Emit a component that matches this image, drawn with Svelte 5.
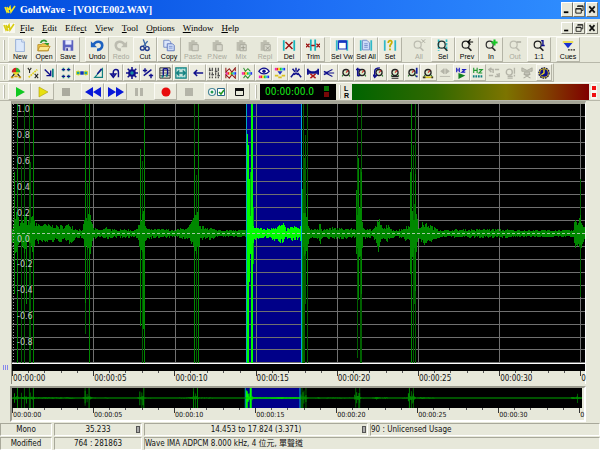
<script>
  const menus = [
    ['', 'F', 'ile'], ['', 'E', 'dit'], ['Effe', 'c', 't'], ['', 'V', 'iew'],
    ['', 'T', 'ool'], ['', 'O', 'ptions'], ['', 'W', 'indow'], ['', 'H', 'elp']
  ];

  const clip = '<path d="M3 3h10v10H3zM6 1h4v3H6z" fill="#bdbdb0"/><path d="M7 6h7v7H7z" fill="#d8d8cc" stroke="#a8a89c"/>';
  const lens = (c) => `<circle cx="6.5" cy="6" r="4" fill="none" stroke="${c}" stroke-width="1.4"/><path d="M9 9l4 4" stroke="${c}" stroke-width="2"/>`;
  const bars = (c) => `<path d="M2 1v12M14 1v12" stroke="${c}" stroke-width="2"/>`;

  const fileGroups = [
    [
      { label: 'New', icon: '<path d="M3 0h7l3 3v11H3z" fill="#dbe8fa" stroke="#8ea8d4"/><path d="M10 0v3h3" fill="#fff" stroke="#8ea8d4"/>' },
      { label: 'Open', icon: '<path d="M1 6h4l1-1h7v8H1z" fill="#f4cf50" stroke="#b88a20"/><path d="M3 8h12l-3 5H1z" fill="#fbe98f" stroke="#b88a20"/><path d="M4 4c2-4 6-3 7-1" fill="none" stroke="#2a9a30" stroke-width="2"/><path d="M8 4h6l-2 3z" fill="#2a9a30"/>' },
      { label: 'Save', icon: '<path d="M2 1h12v12H3l-1-1z" fill="#5b62c0"/><path d="M5 1h7v5H5z" fill="#e8ecff"/><path d="M5 9h6v4H5z" fill="#e0e0f0"/><path d="M6 10h2v3H6z" fill="#3a3f90"/>' }
    ],
    [
      { label: 'Undo', icon: '<path d="M4 6c3-5 10-4 10 1 0 4-4 5-6 5" fill="none" stroke="#1e62c0" stroke-width="3"/><path d="M1 2v7h7z" fill="#1e62c0"/>' },
      { label: 'Redo', off: true, icon: '<path d="M12 6c-3-5-10-4-10 1 0 4 4 5 6 5" fill="none" stroke="#bcbcb0" stroke-width="3"/><path d="M15 2v7H8z" fill="#bcbcb0"/>' },
      { label: 'Cut', icon: '<path d="M6 0l3 8M11 2L6 8" stroke="#3a68a8" stroke-width="1.6"/><circle cx="5" cy="10" r="2.2" fill="none" stroke="#203a90" stroke-width="1.6"/><circle cx="10.500" cy="10.500" r="2.200" fill="none" stroke="#203a90" stroke-width="1.6"/>' },
      { label: 'Copy', icon: '<path d="M2 1h6l2 2v6H2z" fill="#dce6fa" stroke="#6f86c4"/><path d="M6 5h6l2 2v6H6z" fill="#cddaf6" stroke="#5a74bc"/><path d="M8 8h4M8 10h4" stroke="#7d94cf"/>' },
      { label: 'Paste', off: true, icon: clip },
      { label: 'P.New', off: true, icon: clip },
      { label: 'Mix', off: true, icon: clip + '<path d="M10.500 7v5M8 9.500h5" stroke="#98988c"/>' },
      { label: 'Repl', off: true, icon: clip + '<path d="M9 8l4 4M13 8l-4 4" stroke="#98988c"/>' },
      { label: 'Del', icon: bars('#18b4bc') + '<path d="M4 3l8 8M12 3l-8 8" stroke="#9a1010" stroke-width="1.6"/>' },
      { label: 'Trim', icon: '<path d="M5.500 0v13M10.500 0v13" stroke="#18b4bc" stroke-width="2"/><path d="M0 5l4 4M4 5L0 9M12 5l4 4M16 5l-4 4M6 7h4" stroke="#9a1010" stroke-width="1.5"/>' }
    ],
    [
      { label: 'Sel Vw', icon: bars('#30b8c8') + '<path d="M4 2h9v9H4z" fill="#fff" stroke="#1638c0" stroke-width="1.4"/><path d="M4 1h9v3H4z" fill="#1638c0"/>' },
      { label: 'Sel All', icon: bars('#30b8c8') + '<path d="M4 1h5l3 3v8H4z" fill="#cddcf8" stroke="#6f8cc8"/><path d="M6 5h4M6 7h4M6 9h4" stroke="#6f8cc8"/>' },
      { label: 'Set', icon: bars('#30b8c8') + '<path d="M6 4c0-4 5-3 4 0l-2 3v2M8 10.500v2" fill="none" stroke="#c8b000" stroke-width="2"/>' }
    ],
    [
      { label: 'All', off: true, icon: lens('#bcbcb0') + '<path d="M11 0l4 4M15 0l-4 4" stroke="#a8a89c"/>' },
      { label: 'Sel', icon: '<path d="M3 0v13M12 0v13" stroke="#30c0c8" stroke-width="2" stroke-dasharray="3 1"/>' + lens('#203030') },
      { label: 'Prev', icon: lens('#202020') + '<path d="M9 3h6M12 0L9 3l3 3" fill="none" stroke="#000" stroke-width="1.4"/>' },
      { label: 'In', icon: lens('#303030') + '<path d="M12 0v7M8.500 3.500h7" stroke="#18c828" stroke-width="2.400"/>' },
      { label: 'Out', off: true, icon: lens('#bcbcb0') + '<path d="M10 3h5" stroke="#a8a89c" stroke-width="1.600"/>' },
      { label: '1:1', icon: lens('#202020') + '<path d="M10.500 1.500h2v5M10.500 7h4" fill="none" stroke="#10108c" stroke-width="1.600"/>' }
    ],
    [
      { label: 'Cues', icon: '<path d="M2 3h12" stroke="#e8d840" stroke-width="2"/><path d="M3 4h10l-5 6z" fill="#1830d0"/><path d="M8 12h2M11 12h2M14 12h2" stroke="#222" stroke-width="1.500"/>' }
    ]
  ];

  const knob = '<circle cx="7" cy="6.500" r="3.600" fill="#d8e8c8" stroke="#222" stroke-width="1.500"/><path d="M7 6.500L9.500 4" stroke="#d02020" stroke-width="1.200"/><path d="M3.500 9.500l-1 1.500M10.500 9.500l1 1.500" stroke="#2a7a2a" stroke-width="1.300"/>';
  const rainbow = (y) => ['#f020c0', '#f02020', '#f0d820', '#20c830', '#20c8e8', '#2030f0'].map((c, i) => `<path d="M${1 + i * 2} ${y}h2v3h-2z" fill="${c}"/>`).join('');
  const X = '#10108c';

  const effects = [
    ['Doppler', '<path d="M2 6a5 5 0 0 1 5-5v6z" fill="#d02020"/><path d="M7 1a5 5 0 0 1 5 5l-5 1z" fill="#30b030"/><path d="M4 6h6v3H4z" fill="#e8d820"/><path d="M2 12L5 8M12 12L9 8" stroke="#222" stroke-width="1.500"/><path d="M1 12h3M10 12h3M5 11h4" stroke="#d0a010" stroke-width="2"/>'],
    ['Dynamics', '<path d="M2 12L12 3" stroke="#e0d020" stroke-width="2" stroke-dasharray="2 1"/><path d="M1 1l2 3 2-3M3 4v3M9 8l4 5M13 8l-4 5" fill="none" stroke="#222" stroke-width="1.200"/>'],
    ['Echo', `<path d="M2 3l7 7M9 4v6H4" fill="none" stroke="${X}" stroke-width="1.600"/><path d="M11.500 2v10" stroke="#108080" stroke-width="2"/>`],
    ['Compressor', '<path d="M4 1v4M10 1v4M4 9v4M10 9v4" stroke="#108080" stroke-width="2"/><path d="M2 3h4M8 3h4M2 11h4M8 11h4" stroke="#10108c" stroke-width="1.500"/>'],
    ['Flanger', '<path d="M0 5l3-1 4 3 4-3 3 1v4l-3 1-4-3-4 3-3-1z" fill="#e8e020"/><path d="M1 7h3M10 7h3" stroke="#18a0a8" stroke-width="3"/><path d="M5 7h4" stroke="#1030c0" stroke-width="4"/>'],
    ['Interpolate', `<path d="M2 12L11 2v10z" fill="none" stroke="#108080" stroke-width="1.400"/><path d="M5 8L10 2" stroke="${X}" stroke-width="1.600"/>`],
    ['Invert', `<path d="M5 10V6c0-4 6-4 6 0v6M2 8h6l-3 4z" fill="none" stroke="${X}" stroke-width="1.700"/>`],
    ['Mechanize', `<circle cx="7" cy="7" r="4.500" fill="${X}"/><path d="M7 0v14M0 7h14M2 2l10 10M12 2L2 12" stroke="${X}" stroke-width="1.800"/><circle cx="7" cy="7" r="2" fill="#18909c"/>`],
    ['Offset', `<path d="M2 10l9-7M1 4h5M3.500 1.500v5M8 10h5M10.500 8v5" stroke="${X}" stroke-width="1.700"/>`],
    ['Parametric', '<path d="M1 1h12v12H1z" fill="#d8dccc" stroke="#222"/><path d="M1 4h12M1 7h12M1 10h12" stroke="#555"/><path d="M5 2v9M10 2v8M5 2h5" stroke="#10108c" stroke-width="1.600"/><path d="M3 11h2M8 10h2" stroke="#108080" stroke-width="3"/>'],
    ['Pitch', '<path d="M1 1h12v12H1z" fill="#c8e4dc" stroke="#108080" stroke-width="1.500"/><path d="M2 7h10M5 4L2 7l3 3M9 4l3 3-3 3" fill="none" stroke="#108080" stroke-width="1.700"/><path d="M3 2h8M3 12h8" stroke="#18a0a8" stroke-dasharray="2 1"/>'],
    ['Reverse', `<path d="M2 7h11M6 3.500L2.500 7 6 10.500" fill="none" stroke="${X}" stroke-width="1.800"/>`],
    ['Equalizer', '<path d="M2 1v12M5 1v12M9 1v12M12 1v12" stroke="#333" stroke-width="1.200" stroke-dasharray="4 1"/><path d="M1 4h3M4 9h3M8 5h3M11 10h3" stroke="#555" stroke-width="1.500"/>'],
    ['Band filter', rainbow(6) + '<path d="M1 1v5l4-4 3 4 4-5v4M1 13V9l4 4 3-4 4 4V9" fill="none" stroke="#901818" stroke-width="1.200"/>'],
    ['Low pass', rainbow(6) + '<path d="M3 1l2 4 3-3 3 3M3 13l2-3 3 3 3-4" fill="none" stroke="#309030" stroke-width="1.200"/>'],
    ['Spectrum', `<path d="M1 5c3-5 9-5 12 0-3 4-9 4-12 0z" fill="#fff" stroke="${X}" stroke-width="1.500"/><circle cx="7" cy="5" r="2" fill="${X}"/>` + rainbow(10)],
    ['Noise reduction', rainbow(1) + '<path d="M4 5h6l-3 4z" fill="#2030c0"/><path d="M1 10h4M9 10h4M5 12h4" stroke="#d8c020" stroke-width="2"/>'],
    ['Pop filter', `<path d="M1 12l4-5M13 12L9 7M3 2l3 4M11 2L8 6M7 1v4M5 9l2-2 2 2" fill="none" stroke="${X}" stroke-width="1.700"/>`],
    ['Silence', `<path d="M1 2v7M13 2v7M1 4l4 2h4l4-2M1 7h12" fill="none" stroke="${X}" stroke-width="2"/><path d="M4 8l6 5M10 8l-6 5" stroke="#b01818" stroke-width="1.600"/>`],
    ['Smoother', `<path d="M1 7h12M3 7l8-4M3 7l8 4M1 5l5 2-5 2" fill="none" stroke="${X}" stroke-width="1.200"/>`],
    ['Volume', knob],
    ['Fade in', knob + `<path d="M2 1v9h3M0 3h5" fill="none" stroke="${X}" stroke-width="1.800"/>`],
    ['Fade out', knob + `<path d="M2 12V5c0-3 3-4 6-4M0 9l2 3 3-3" fill="none" stroke="${X}" stroke-width="1.700"/>`],
    ['Match volume', knob + '<path d="M3 11h8M3 13h8" stroke="#222" stroke-width="1.200"/>'],
    ['Maximize', knob + '<path d="M12.500 1v7M12.500 10v2" stroke="#1020a0" stroke-width="2"/>'],
    ['Shape volume', knob + '<path d="M1 12h12" stroke="#d8c820" stroke-width="2"/><path d="M1 12h3M11 12h2" stroke="#333" stroke-width="2"/>'],
    ['Exchange', '<path d="M6 2L2 5l4 3zM8 2l4 3-4 3zM1 11h12" fill="#b4b4a8" stroke="#b4b4a8"/>', true],
    ['Playback rate', '<path d="M2 1v5M5 1v5M2 3.500h3M8 3h4l-4 3h4" fill="none" stroke="#1818c0" stroke-width="1.300"/><path d="M4 7l8 3-8 4z" fill="#108020"/>'],
    ['Resample', '<path d="M2 1v6M6 1v6M2 4h4M8 3h4l-4 4h4" fill="none" stroke="#209830" stroke-width="1.300"/><path d="M1 11h12" stroke="#108080" stroke-width="2.500" stroke-dasharray="2 1"/>'],
    ['Channel mixer', '<path d="M1 3h5v4M8 3h5M8 11h5V7M1 10h5M4 1L1 3l3 3M10 8l3 3" fill="none" stroke="#b4b4a8" stroke-width="1.700"/>', true],
    ['Stereo center', '<circle cx="5" cy="6" r="3.500" fill="none" stroke="#b4b4a8" stroke-width="1.600"/><path d="M11 1v7M11 9v2M3 11h6M3 13h6" stroke="#b4b4a8" stroke-width="1.600"/>', true],
    ['Reduce vocals', '<path d="M1 1l6 3 6-3v4H1zM4 6h6v3H4z" fill="#c4c4b8" stroke="#a8a89c"/><path d="M3 13l8-5M11 13L3 8" stroke="#a8a89c" stroke-width="1.300"/>', true],
    ['Expression', '<circle cx="7" cy="7" r="6" fill="#e0c818" stroke="#181858" stroke-width="1.500" stroke-dasharray="2 1"/><circle cx="7" cy="7" r="4.500" fill="#10108c"/><path d="M7 3v4l-3 2" fill="none" stroke="#f0e020" stroke-width="1.600"/>']
  ];

  const transport = [
    [
      ['Play', '<path d="M5 1l9 5-9 5z" fill="#10c820"/>'],
      ['Play selection', '<path d="M5 1l9 5-9 5z" fill="#e8e010" stroke="#a89c10" stroke-width=".6"/>'],
      ['Stop', '<path d="M5 2h8v8H5z" fill="#aaaa9e"/>', true]
    ],
    [
      ['Rewind', '<path d="M9 1v10L1 6zM17 1v10L9 6z" fill="#0818d8"/>'],
      ['Fast forward', '<path d="M1 1v10l8-5zM9 1v10l8-5z" fill="#0818d8"/>'],
      ['Pause', '<path d="M5 2h3v8H5zM10 2h3v8h-3z" fill="#b4b4a8"/>', true]
    ],
    [
      ['Record', '<circle cx="9" cy="6" r="4.500" fill="#e80c0c"/>'],
      ['Stop recording', '<path d="M5 2h8v8H5z" fill="#b4b4a8"/>', true]
    ],
    [
      ['Control properties', '<circle cx="5" cy="6" r="3.500" fill="#fff" stroke="#4a8898" stroke-width="1.200"/><circle cx="5" cy="6" r="1.500" fill="#209850"/><path d="M10.500 2.500h7v7h-7z" fill="#fff" stroke="#2a6888"/><path d="M12 6l2 2 3-4" fill="none" stroke="#209820" stroke-width="1.500"/>'],
      ['Device window', '<path d="M5.500 2.500h8v7h-8z" fill="#e7e8da" stroke="#111"/><path d="M5 2h9v3H5z" fill="#111"/>']
    ]
  ];

  const winIcons = [
    ['Minimize', '<path d="M2 8h5v2H2z"/>'],
    ['Restore', '<path d="M4 3V2h6v5H8M2 5h6v5H2zM2 5.500h6M4 2.500h6" fill="none" stroke="#111"/>'],
    ['Close', '<path d="M2.500 2.500l6 7M8.500 2.500l-6 7" fill="none" stroke="#111" stroke-width="2"/>']
  ];

  // The plot covers 573 x 259 units, with silence at MID.
  const W = 573, H = 259, MID = 129;
  const envelope = [
    [0, 8], [2, 18], [5, 22], [7, 9], [10, 12], [12, 20], [15, 10], [19, 14], [21, 20], [23, 9], [28, 9], [48, 7],
    [58, 9], [63, 4], [70, 4], [72, 12], [76, 18], [79, 14], [81, 5], [88, 3], [95, 6], [101, 3], [108, 4], [123, 3],
    [127, 12], [130, 17], [133, 8], [135, 4], [148, 4], [163, 3], [176, 6], [181, 14], [185, 20], [188, 6], [197, 6],
    [203, 3], [233, 3], [235, 22], [239, 18], [242, 6], [253, 4], [271, 9], [274, 4], [282, 7], [287, 4], [290, 16],
    [294, 24], [297, 5], [306, 4], [308, 11], [310, 4], [322, 5], [343, 4], [345, 22], [349, 24], [351, 6], [360, 3],
    [364, 8], [366, 16], [368, 9], [371, 4], [375, 9], [378, 4], [386, 3], [398, 8], [400, 24], [404, 20], [406, 6],
    [410, 10], [416, 9], [423, 5], [433, 3], [473, 4], [508, 3], [561, 3], [563, 16], [566, 13], [568, 17], [571, 8], [573, 5]
  ];
  // Peaks: x, top, bottom, tone (0 dim, 1 full).
  const peaks = [
    [2, 68, 190, 1], [5, 0, H, 1], [9, 62, H, 0], [12, 0, H, 0], [14, 110, 200, 1], [17, 0, H, 0], [18, 58, H, 0], [21, 0, H, 1],
    [73, 0, 230, 0], [73, 37, 199, 1], [75, 79, 186, 0], [77, 0, H, 1], [78, 111, 150, 1],
    [128, 45, 222, 1], [130, 57, H, 0], [132, 0, H, 1], [131, 107, 225, 1],
    [182, 0, H, 0], [182, 46, H, 1], [184, 71, H, 0], [186, 0, H, 1],
    [235, 30, H, 1], [236, 41, H, 1], [237, 75, 178, 1], [238, 68, 150, 0], [239, 0, H, 1], [240, 0, H, 1], [241, 103, 160, 0],
    [290, 85, H, 1], [291, 0, H, 0], [292, 54, H, 0], [293, 31, 200, 0], [295, 0, H, 0], [295, 91, 180, 1],
    [344, 86, 150, 1], [345, 0, 254, 0], [346, 54, 196, 1], [348, 64, H, 0], [349, 0, H, 0], [349, 68, 190, 1],
    [398, 68, 170, 1], [399, 0, H, 1], [401, 41, H, 0], [402, 100, 200, 0], [403, 0, H, 0], [403, 70, 187, 1],
    [568, 75, 193, 0]
  ];
  const SEL = [235, 290];

  let seed = 7;
  const rand = () => (seed = (seed * 16807) % 2147483647) / 2147483647;
  const level = (x) => {
    const i = Math.max(1, envelope.findIndex((p) => p[0] >= x));
    const [x0, a0] = envelope[i - 1], [x1, a1] = envelope[i];
    return a0 + ((a1 - a0) * (x - x0)) / (x1 - x0);
  };
  const bar = (x, t, b) => `M${x} ${t}h1V${b}h-1z`;
  const inSel = (x) => x >= SEL[0] && x < SEL[1];
  let dim = '', full = '', hot = '', hotDim = '';
  for (const [x, t, b, tone] of peaks) {
    if (inSel(x)) tone ? (hot += bar(x, t, b)) : (hotDim += bar(x, t, b));
    else tone ? (full += bar(x, t, b)) : (dim += bar(x, t, b));
  }
  for (let x = 0; x < W; x++) {
    const a = level(x);
    const d = bar(x, Math.round(MID - a * (0.55 + rand() * 0.6)), Math.round(MID + 1 + a * (0.55 + rand() * 0.6)));
    inSel(x) ? (hot += d) : (full += d);
  }

  const gridX = [81, 163, 244, 325, 406, 487, 568];
  const gridY = Array.from({ length: 21 }, (_, i) => Math.round(i * 12.95 - 0.6)).filter((y) => y >= 0 && y < H);
  const scale = ['1.0', '0.8', '0.6', '0.4', '0.2', '0.0', '-0.2', '-0.4', '-0.6', '-0.8'];
  const times = ['00:00:00', '00:00:05', '00:00:10', '00:00:15', '00:00:20', '00:00:25', '00:00:30', '0'];
</script>

{#snippet windowButtons()}
  <div class="winbtns">
    {#each winIcons as [name, art]}
      <button aria-label={name} class:close={name === 'Close'}><svg viewBox="0 0 11 12">{@html art}</svg></button>
    {/each}
  </div>
{/snippet}

{#snippet wave(main)}
  <svg class="wave" viewBox="0 0 {W} {H}" preserveAspectRatio="none" shape-rendering={main ? 'crispEdges' : 'auto'} aria-hidden="true">
    <rect x={SEL[0]} y="0" width={SEL[1] - SEL[0]} height={H} fill="#000088" />
    {#if main}
      {#each gridX as x}<rect {x} y="0" width="1" height={H} fill="#707070" />{/each}
      {#each gridY as y}<rect x="0" {y} width={W} height="1" fill="#707070" />{/each}
    {/if}
    <path d={dim} fill="#006000" />
    <path d={full} fill="#008800" />
    <path d={hotDim} fill="#00a018" />
    <path d={hot} fill="#00fc00" />
    <rect x={SEL[0] - 1} y="0" width="1" height={H} fill="#00a8c0" />
    <rect x={SEL[1] - 1} y="0" width="1" height={H} fill="#00a8d8" />
    {#if main}
      <path d="M0 {MID + 0.5}H{W}" stroke="#a4c8a4" stroke-dasharray="3 2" />
      <path d="M1 0V{H}" stroke="#a0a0a0" stroke-dasharray="1 2" />
    {:else}
      <path d="M0 {MID}H{W}" stroke="#008400" stroke-width="15" />
      <path d="M{SEL[0]} {MID}H{SEL[1]}" stroke="#00fc00" stroke-width="15" />
    {/if}
  </svg>
{/snippet}

{#snippet ruler(kind)}
  <div class="ruler {kind}">
    {#each times as t}<span>{t}</span>{/each}
  </div>
{/snippet}

<div class="app">
  <header class="title">
    <svg class="logo" viewBox="0 0 12 10" aria-hidden="true"><path d="M1 2l2 5 3-5 1 5 4-6M3 2l2 6" fill="none" stroke="#f4e820" stroke-width="1.600" /></svg>
    <h1>GoldWave - [VOICE002.WAV]</h1>
    {@render windowButtons()}
  </header>

  <nav class="menu">
    <span class="doc"><svg class="logo" viewBox="0 0 12 10" aria-hidden="true"><path d="M1 2l2 5 3-5 1 5 4-6M3 2l2 6" fill="none" stroke="#d8cc10" stroke-width="1.600" /></svg></span>
    <div class="items">
      {#each menus as [a, u, b]}<button>{a}<u>{u}</u>{b}</button>{/each}
    </div>
    {@render windowButtons()}
  </nav>

  <div class="bar files">
    {#each fileGroups as group}
      <div class="group">
        {#each group as b}
          <button disabled={b.off}><svg viewBox="0 0 16 14">{@html b.icon}</svg>{b.label}</button>
        {/each}
      </div>
    {/each}
  </div>

  <div class="bar effects">
    {#each effects as [name, art, off]}
      <button aria-label={name} disabled={off}><svg viewBox="0 0 14 14">{@html art}</svg></button>
    {/each}
  </div>

  <div class="controls">
    <div class="bar transport">
      {#each transport as group}
        <div class="group">
          {#each group as [name, art, off]}
            <button aria-label={name} disabled={off}><svg viewBox="0 0 18 12">{@html art}</svg></button>
          {/each}
        </div>
      {/each}
    </div>
    <div class="bar clock">
      <div class="lcd"><output>00:00:00.0</output><span class="leds"><i></i><i></i></span></div>
    </div>
    <div class="bar level">
      <div class="lr"><span>L</span><span>R</span></div>
      <div class="meter"></div>
      <div class="clips"><i></i><i></i></div>
    </div>
  </div>

  <main>
    <div class="side"><i></i><i></i><i></i></div>
    <div class="doc-area">
      <section class="frame">
        <div class="plot">
          {@render wave(true)}
          <div class="scale">{#each scale as s}<span>{s}</span>{/each}</div>
        </div>
        <div class="cue"></div>
        {@render ruler('large')}
      </section>
      <section class="frame overview">
        <div class="mini">{@render wave(false)}</div>
        {@render ruler('small')}
      </section>
    </div>
  </main>

  <footer>
    <div class="row">
      <span class="a">Mono</span>
      <span class="b">35.233<i class="handle"></i></span>
      <span class="c">14.453 to 17.824 (3.371)<i class="handle"></i></span>
      <span class="rest">90 : Unlicensed Usage</span>
    </div>
    <div class="row">
      <span class="a">Modified</span>
      <span class="b">764 : 281863</span>
      <span class="rest">Wave IMA ADPCM 8.000 kHz, 4 位元, 單聲道</span>
    </div>
  </footer>
</div>

<style>
  :global(body) { margin: 0; background: #e7e8da; }
  .app {
    min-height: 100vh;
    display: flex;
    flex-direction: column;
    overflow: hidden;
    background: #e7e8da;
    color: #111;
    font-family: "DejaVu Sans Condensed", "Noto Sans", "Noto Sans CJK TC", sans-serif;
    font-size: 8px;
  }
  button {
    appearance: none;
    box-sizing: border-box;
    margin: 0;
    padding: 0;
    border: 0;
    border-radius: 0;
    background: none;
    color: inherit;
    font: inherit;
  }
  svg { display: block; }

  .title {
    display: flex;
    align-items: center;
    height: 19px;
    padding-left: 4px;
    background: linear-gradient(90deg, #004cdc, #1c6cf4 50%, #3090ff);
    color: #fff;
  }
  .logo { width: 12px; height: 10px; }
  h1 { margin: 0 auto 0 4px; font: bold 10px/12px "Liberation Serif", serif; }
  .winbtns { display: flex; padding-right: 2px; }
  .winbtns button {
    width: 12px;
    height: 15px;
    background: #e7e8da;
    border: 1px solid;
    border-color: #fff #77776c #77776c #fff;
  }
  .winbtns .close { margin-left: 1px; }
  .winbtns svg { width: 10px; height: 11px; }

  .menu { display: flex; align-items: center; height: 17px; }
  .menu .winbtns button { height: 12px; }
  .menu .winbtns svg { height: 10px; }
  .doc { background: #f8f8f0; margin-left: 3px; }
  .items { display: flex; gap: 8px; margin: 0 auto 0 5px; font: 9px/12px "Liberation Serif", serif; color: #000; }

  .bar {
    display: flex;
    align-items: center;
    box-sizing: border-box;
    padding-left: 8px;
    border-top: 1px solid #fcfcf6;
    border-bottom: 1px solid #b8b8aa;
    background: linear-gradient(#fff, #fff) 3px 50% / 1px 80% no-repeat, linear-gradient(#b8b8aa, #b8b8aa) 4px 50% / 1px 80% no-repeat;
  }
  .group { display: flex; }
  .bar button {
    display: flex;
    flex-direction: column;
    align-items: center;
    justify-content: center;
    background: #ececdf;
    border: 1px solid;
    border-color: #fafaf4 #b4b4a6 #b4b4a6 #fafaf4;
    white-space: nowrap;
  }
  .bar button:disabled { background: none; border-color: transparent; color: #a8a89c; }

  .files { height: 27px; gap: 5px; font: 7px/8px "Liberation Sans", sans-serif; color: #000; }
  .files button { width: 24px; height: 25px; }
  .files svg { width: 14px; height: 13px; margin-bottom: 1px; }

  .effects { height: 19px; max-width: 554px; padding-right: 1px; border-right: 1px solid #b8b8aa; }
  .effects button { flex: 1; height: 17px; }
  .effects svg { width: 12px; height: 12px; }

  .controls { display: flex; height: 19px; }
  .transport { gap: 4px; padding-right: 2px; }
  .transport button { width: 23px; height: 17px; }
  .transport svg { width: 18px; height: 12px; }
  .lcd {
    display: flex;
    align-items: center;
    justify-content: space-between;
    box-sizing: border-box;
    width: 76px;
    height: 16px;
    padding: 0 7px 0 5px;
    background: #000;
    color: #18f018;
    font: 10px/14px "DejaVu Sans Condensed", sans-serif;
  }
  .leds { display: grid; gap: 1px; }
  .leds i { width: 5px; height: 5px; background: #087808; }
  .leds i + i { background: #780808; }
  .level { flex: 1; padding-right: 3px; gap: 2px; }
  .lr { display: grid; width: 6px; font: bold 7px/7px "Liberation Sans", sans-serif; color: #000; }
  .meter { flex: 1; height: 16px; background: linear-gradient(90deg, #006400, #306800 35%, #7c7400 65%, #804000 82%, #800000); }
  .clips { display: grid; gap: 3px; padding: 2px 1px; background: #f8f8f0; }
  .clips i { width: 4px; height: 4px; background: #f01010; }

  main { flex: 1; display: flex; }
  .side { display: flex; align-items: flex-end; justify-content: center; gap: 1px; width: 11px; padding-bottom: 52px; }
  .side i { width: 1px; height: 5px; background: #8888ec; }
  .doc-area { flex: 1; min-width: 0; margin-right: 14px; display: flex; flex-direction: column; gap: 2px; }
  .frame {
    flex: 1;
    display: flex;
    flex-direction: column;
    border: solid;
    border-width: 3px 1px 0;
    border-color: #a4a496 #fff #fff #8c8c80;
  }
  .plot { position: relative; flex: 1; min-height: 259px; background: #000; }
  .wave { position: absolute; inset: 0; width: 100%; height: 100%; }
  .scale {
    position: absolute;
    inset: 0 auto 0 5px;
    display: flex;
    flex-direction: column;
    color: #c8c8c8;
    font: 8px/12px "DejaVu Sans", sans-serif;
  }
  .scale span { flex: 1; }
  .cue { height: 7px; border-top: 1px solid #fff; background: #000; }
  .ruler { display: flex; }
  .ruler span {
    flex: 0 0 14.17%;
    box-sizing: border-box;
    padding: 3px 0 0 1px;
    background:
      linear-gradient(#333, #333) 0 0 / 1px 5px no-repeat,
      repeating-linear-gradient(90deg, #555 0 1px, transparent 1px 20%) 0 0 / 100% 2px no-repeat;
  }
  .ruler span:last-child { flex: 1; min-width: 0; background: linear-gradient(#333, #333) 0 0 / 1px 5px no-repeat; }
  .large { height: 13px; font-size: 8px; line-height: 10px; }
  .small { height: 12px; font-size: 7px; line-height: 9px; }
  .overview { flex: none; border-width: 2px; border-color: #9c9c90 #fff #fff #9c9c90; margin-left: -1px; }
  .mini { position: relative; height: 20px; background: #000; margin-right: 2px; }

  footer { display: grid; gap: 1px; padding: 1px 0; }
  .row { display: flex; gap: 2px; }
  .row span {
    box-sizing: border-box;
    display: flex;
    align-items: center;
    height: 13px;
    border: 1px solid;
    border-color: #a8a89a #fff #fff #a8a89a;
    white-space: nowrap;
    line-height: 11px;
  }
  .row .a { width: 52px; justify-content: center; }
  .row .b { width: 88px; justify-content: center; }
  .row .c { width: 224px; justify-content: center; }
  .row .rest { flex: 1; }
  .row .b, .row .c { position: relative; }
  .handle {
    position: absolute;
    right: 1px;
    top: 2px;
    width: 2px;
    height: 5px;
    border: 1px solid #555;
    background: #aaa;
  }
</style>
